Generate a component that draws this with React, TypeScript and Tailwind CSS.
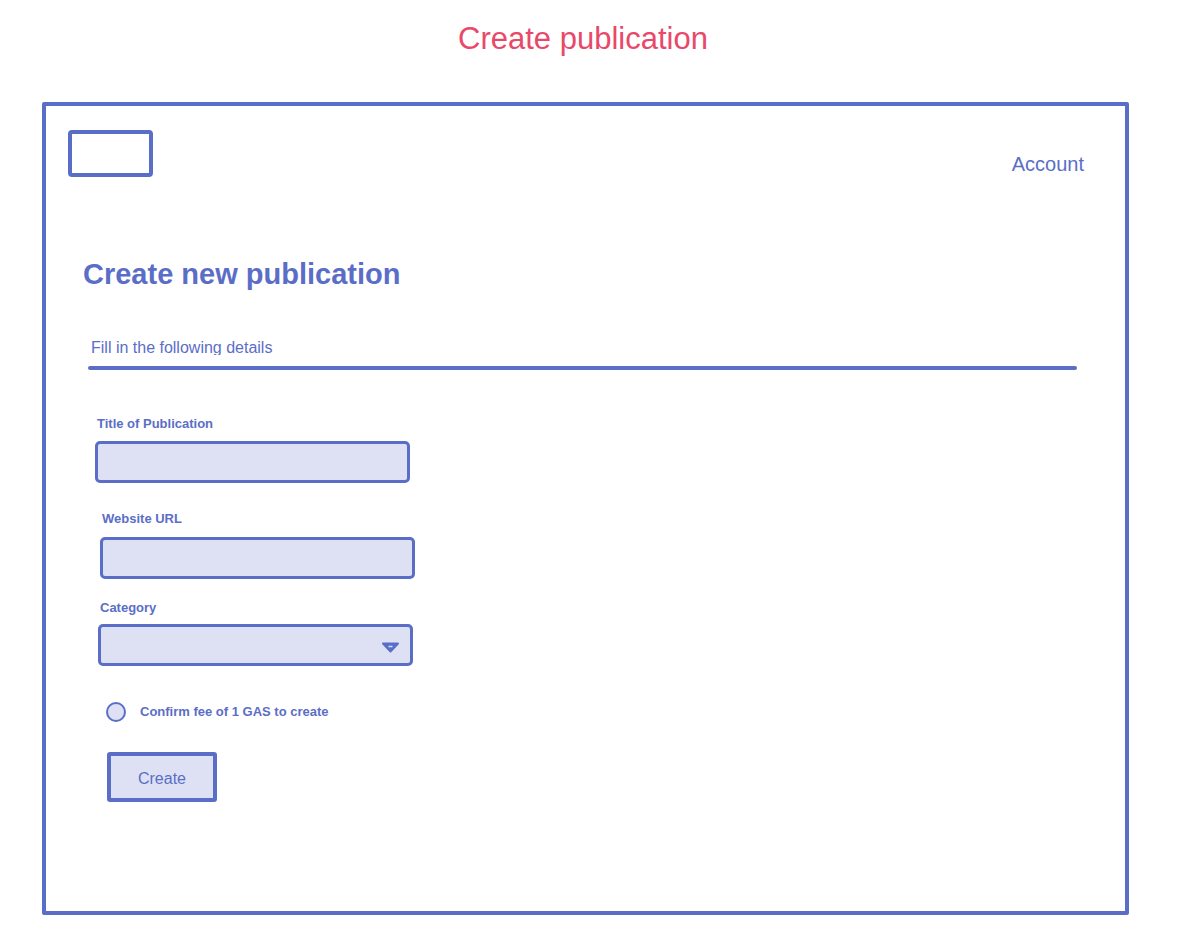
const blue = "#5b6ec7";

function Label({ text }: { text: string }) {
  return <p className="text-[13px] font-bold leading-4 text-[#5b6ec7]">{text}</p>;
}

export default function App() {
  return (
    <div
      className="min-h-[948px] w-[1178px] bg-white"
      style={{ fontFamily: '"Liberation Sans", Arial, sans-serif' }}
    >
      <h1 className="pr-[12px] pt-[21px] text-center text-[31px] leading-[36px] text-[#e8496a]">
        Create publication
      </h1>

      <div className="ml-[42px] mt-[45px] h-[813px] w-[1087px] rounded-[2px] border-4 border-[#5b6ec7]">
        <div className="flex items-start justify-between pl-[22px] pr-[41px] pt-[24px]">
          <div className="h-[47px] w-[85px] rounded-[4px] border-4 border-[#5b6ec7]" />
          <span className="mt-[22px] text-[20px] leading-6 text-[#5b6ec7]">Account</span>
        </div>

        <h2 className="ml-[37px] mt-[80px] text-[29px] font-bold leading-[34px] text-[#5b6ec7]">
          Create new publication
        </h2>

        <div className="ml-[45px] mt-[47px] h-[17px] overflow-hidden text-[16px] leading-[19px] text-[#5b6ec7]">
          Fill in the following details
        </div>
        <div className="ml-[42px] mt-[11px] h-[4px] w-[989px] rounded-full bg-[#5b6ec7]" />

        <div className="ml-[51px] mt-[46px]">
          <Label text="Title of Publication" />
        </div>
        <div className="ml-[49px] mt-[9px] h-[42px] w-[315px] rounded-[5px] border-[3px] border-[#5b6ec7] bg-[#dde1f3]" />

        <div className="ml-[56px] mt-[28px]">
          <Label text="Website URL" />
        </div>
        <div className="ml-[54px] mt-[10px] h-[42px] w-[315px] rounded-[5px] border-[3px] border-[#5b6ec7] bg-[#dde1f3]" />

        <div className="ml-[54px] mt-[21px]">
          <Label text="Category" />
        </div>
        <div className="ml-[52px] mt-[8px] flex h-[42px] w-[315px] items-center justify-end rounded-[5px] border-[3px] border-[#5b6ec7] bg-[#dde1f3] pr-[11px]">
          <svg width="17" height="11" viewBox="0 0 17 11" className="mt-[4px]">
            <path d="M1 1.5 L16 1.5 L8.5 9.5 Z" fill={blue} stroke={blue} strokeWidth="2" strokeLinejoin="round" />
            <path d="M6.5 4.5 L10.5 4.5" stroke="#dde1f3" strokeWidth="1.5" />
          </svg>
        </div>

        <div className="ml-[60px] mt-[36px] flex items-center gap-[14px]">
          <div className="h-[20px] w-[20px] rounded-full border-[2.5px] border-[#5b6ec7] bg-[#dde1f3]" />
          <span className="text-[13px] font-bold leading-4 text-[#5b6ec7]">
            Confirm fee of 1 GAS to create
          </span>
        </div>

        <button
          type="button"
          className="ml-[61px] mt-[30px] flex h-[50px] w-[110px] items-center justify-center rounded-[3px] border-4 border-[#5b6ec7] bg-[#dde1f3] pt-[3px] text-[16px] text-[#5b6ec7]"
        >
          Create
        </button>
      </div>
    </div>
  );
}
